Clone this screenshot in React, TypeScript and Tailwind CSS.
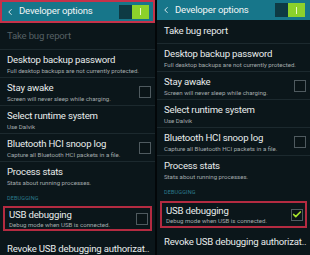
import { ChevronLeft, Check } from "lucide-react"

type Item = { title: string; sub?: string; box?: boolean }

const items: Item[] = [
  { title: "Desktop backup password", sub: "Full desktop backups are not currently protected." },
  { title: "Stay awake", sub: "Screen will never sleep while charging.", box: true },
  { title: "Select runtime system", sub: "Use Dalvik" },
  { title: "Bluetooth HCI snoop log", sub: "Capture all Bluetooth HCI packets in a file.", box: true },
  { title: "Process stats", sub: "Stats about running processes." },
]

function CheckBox({ checked }: { checked?: boolean }) {
  return (
    <div className="flex h-[12px] w-[12px] shrink-0 items-center justify-center border border-[#4f5a5f] bg-[#0a1417]">
      {checked && <Check className="h-[11px] w-[11px] text-[#a6e32c]" strokeWidth={4} />}
    </div>
  )
}

function Row({ item, last }: { item: Item; last?: boolean }) {
  return (
    <div className={`flex h-[28px] shrink-0 items-center pl-[7px] pr-[4px] ${last ? "" : "border-b border-[#1c292e]"}`}>
      <div className="flex flex-1 flex-col whitespace-nowrap">
        <span className="text-[9.6px] leading-[13px] tracking-[-0.2px] text-[#e8ecec]">{item.title}</span>
        {item.sub && <span className="text-[6.1px] leading-[9px] text-[#a3abad]">{item.sub}</span>}
      </div>
      {item.box && <CheckBox />}
    </div>
  )
}

function Toggle() {
  return (
    <div className="flex h-[14px] w-[30px] shrink-0">
      <div className="flex-1 bg-[#0e3a44]" />
      <div className="flex w-[17px] items-center justify-center bg-[#8cd12b]">
        <div className="h-[7px] w-[1.5px] bg-[#e9f8c8]" />
      </div>
    </div>
  )
}

function Panel({ left }: { left?: boolean }) {
  return (
    <div className={`flex flex-col overflow-hidden bg-[#0b161a] ${left ? "w-[155px]" : "w-[153px]"}`}>
      <div
        className={`flex shrink-0 items-center bg-[#17768a] ${left ? "h-[23px] border-2 border-[#c5324a] pl-[3px] pr-[4px]" : "h-[20px] pl-[4px] pr-[5px]"}`}
      >
        <ChevronLeft className="h-[10px] w-[10px] text-white" strokeWidth={2} />
        <span className="ml-[4px] flex-1 text-[9.6px] tracking-[-0.2px] text-[#f1f5f5]">Developer options</span>
        <Toggle />
      </div>
      <div
        className={`flex shrink-0 items-center border-b border-[#1c292e] pl-[7px] text-[9.6px] tracking-[-0.2px] ${left ? "h-[27px] text-[#566064]" : "h-[24px] text-[#e8ecec]"}`}
      >
        Take bug report
      </div>
      {items.map((it, i) => (
        <Row key={it.title} item={it} last={i === items.length - 1} />
      ))}
      <div
        className={`flex shrink-0 items-center pl-[7px] text-[5.5px] tracking-wide text-[#2c7c8d] ${left ? "h-[16px]" : "h-[17px]"}`}
      >
        DEBUGGING
      </div>
      <div
        className={`mx-[3px] flex shrink-0 items-center border-2 border-[#b42b41] pl-[4px] pr-[2px] ${left ? "h-[25px]" : "h-[27px]"}`}
      >
        <div className="flex flex-1 flex-col whitespace-nowrap">
          <span className="text-[9.6px] leading-[12px] tracking-[-0.2px] text-[#e8ecec]">USB debugging</span>
          <span className="text-[6.1px] leading-[8px] text-[#a3abad]">Debug mode when USB is connected.</span>
        </div>
        <CheckBox checked={!left} />
      </div>
      <div
        className={`flex shrink-0 items-center whitespace-nowrap pl-[7px] text-[9.6px] tracking-[-0.2px] text-[#e8ecec] ${left ? "h-[36px]" : "h-[28px]"}`}
      >
        Revoke USB debugging authorizat..
      </div>
    </div>
  )
}

export default function App() {
  return (
    <div className="flex h-[255px] w-[310px] gap-[2px] overflow-hidden bg-[#030709] font-['Roboto',sans-serif]">
      <Panel left />
      <Panel />
    </div>
  )
}
